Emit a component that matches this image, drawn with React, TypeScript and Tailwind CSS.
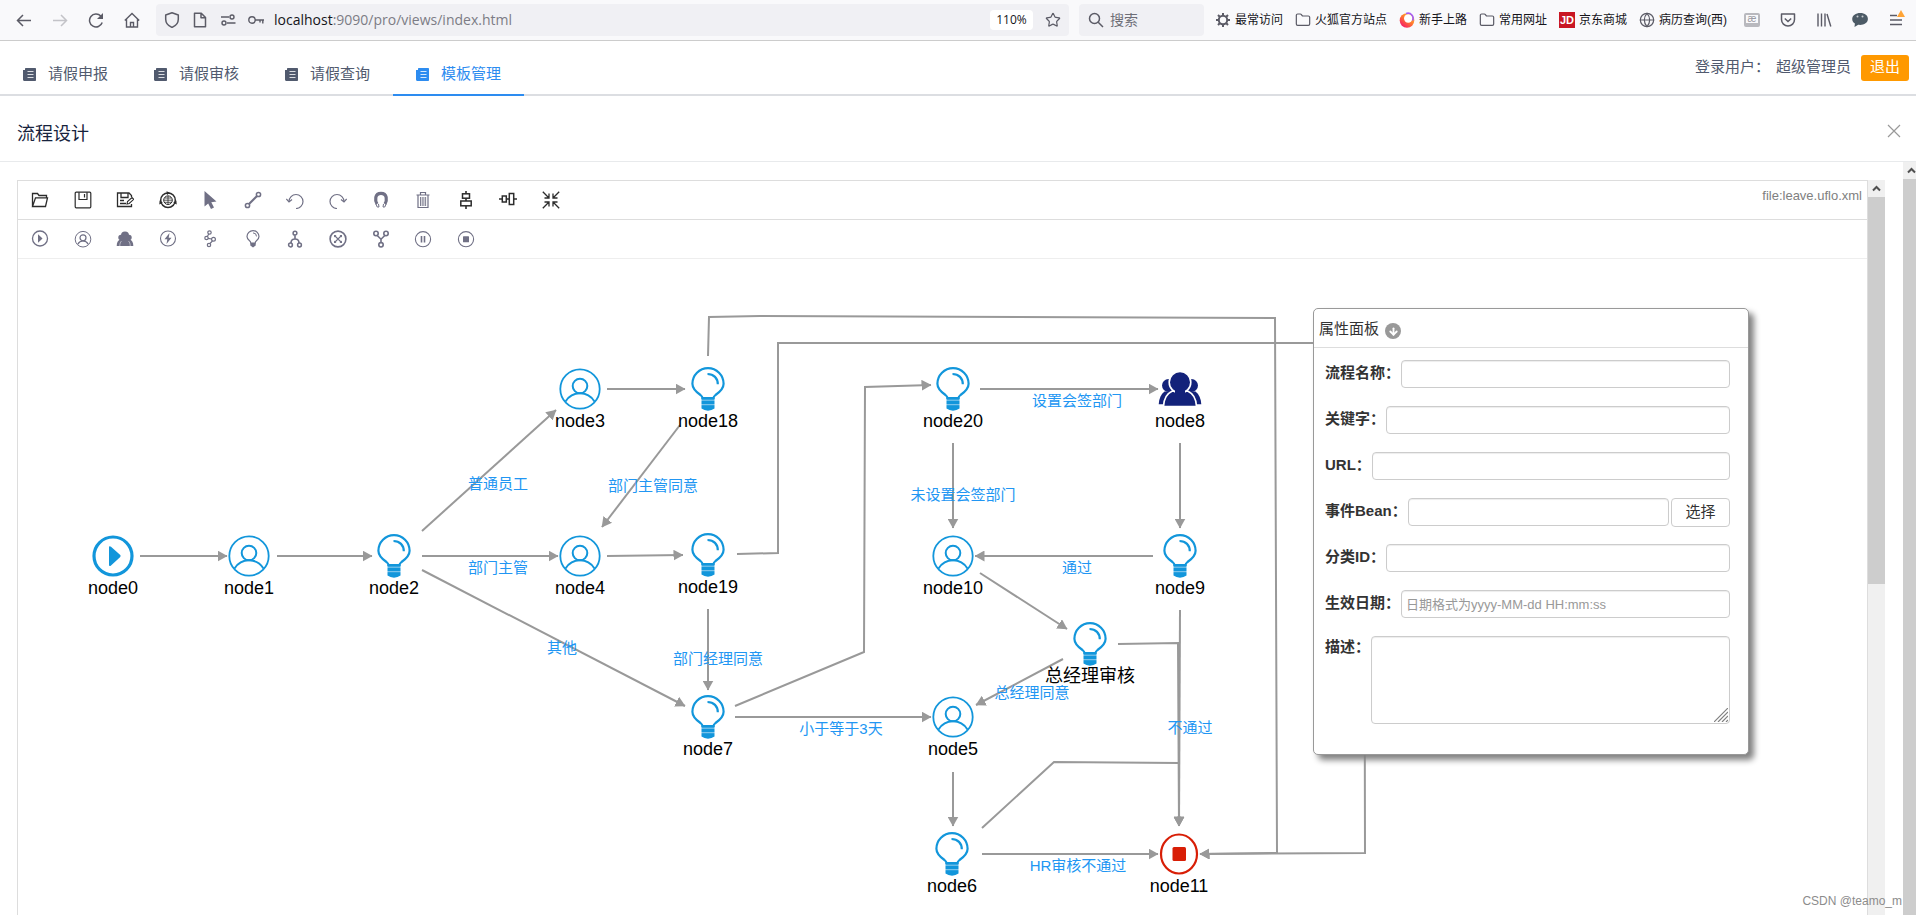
import React from "react";
import { ArrowDown, Folder, Globe, Star } from "lucide-react";

type Kind = "start" | "task" | "decision" | "countersign" | "end";

interface FlowNode {
  name: string;
  kind: Kind;
  x: number;
  y: number;
}

interface EdgeLabel {
  text: string;
  x: number;
  y: number;
}

const nodes: FlowNode[] = [
  { name: "node0", kind: "start", x: 95, y: 297 },
  { name: "node1", kind: "task", x: 231, y: 297 },
  { name: "node2", kind: "decision", x: 376, y: 297 },
  { name: "node3", kind: "task", x: 562, y: 130 },
  { name: "node18", kind: "decision", x: 690, y: 130 },
  { name: "node4", kind: "task", x: 562, y: 297 },
  { name: "node19", kind: "decision", x: 690, y: 296 },
  { name: "node20", kind: "decision", x: 935, y: 130 },
  { name: "node8", kind: "countersign", x: 1162, y: 130 },
  { name: "node10", kind: "task", x: 935, y: 297 },
  { name: "node9", kind: "decision", x: 1162, y: 297 },
  { name: "总经理审核", kind: "decision", x: 1072, y: 385 },
  { name: "node7", kind: "decision", x: 690, y: 458 },
  { name: "node5", kind: "task", x: 935, y: 458 },
  { name: "node6", kind: "decision", x: 934, y: 595 },
  { name: "node11", kind: "end", x: 1161, y: 595 },
];

const edges = [
  "122,297 209,297",
  "259,297 354,297",
  "404,272 538,151",
  "404,297 540,297",
  "404,311 667,447",
  "589,130 667,130",
  "662,166 584,268",
  "589,297 665,296",
  "690,97 691,58 742,57 1257,59 1259,594 1182,595",
  "719,295 760,294 760,84 1346,84 1347,594 1182,595",
  "690,350 690,431",
  "717,447 846,393 847,128 913,126",
  "717,458 913,458",
  "962,130 1140,130",
  "935,184 935,269",
  "1162,184 1162,269",
  "1135,297 957,297",
  "962,314 1049,370",
  "1045,400 958,446",
  "1100,385 1160,384 1161,567",
  "1162,351 1161,567",
  "964,569 1036,503 1161,504 1161,567",
  "935,513 935,567",
  "964,595 1140,595",
];

const edgeLabels: EdgeLabel[] = [
  { text: "普通员工", x: 480, y: 225 },
  { text: "部门主管", x: 480, y: 309 },
  { text: "其他", x: 544, y: 389 },
  { text: "部门主管同意", x: 635, y: 227 },
  { text: "未设置会签部门", x: 945, y: 236 },
  { text: "设置会签部门", x: 1059, y: 142 },
  { text: "通过", x: 1059, y: 309 },
  { text: "部门经理同意", x: 700, y: 400 },
  { text: "总经理同意", x: 1014, y: 434 },
  { text: "小于等于3天", x: 823, y: 470 },
  { text: "不通过", x: 1172, y: 469 },
  { text: "HR审核不通过", x: 1060, y: 607 },
];

const Svg = ({
  size = 18,
  className = "",
  children,
}: {
  size?: number;
  className?: string;
  children: React.ReactNode;
}) => (
  <svg
    width={size}
    height={size}
    viewBox={`0 0 ${size} ${size}`}
    fill="none"
    stroke="currentColor"
    className={`shrink-0 ${className}`}
  >
    {children}
  </svg>
);

const NodeIcon = ({ kind }: { kind: Kind }) => {
  switch (kind) {
    case "start":
      return (
        <Svg size={44} className="text-[#1296db]">
          <circle cx="22" cy="22" r="19" strokeWidth="3.2" />
          <path
            d="M18 13.5c0-1.5 1-1.7 2-.7l9 8c.8.8.8 1.6 0 2.4l-9 8.3c-1 1-2 .6-2-.8z"
            fill="currentColor"
            stroke="none"
          />
        </Svg>
      );
    case "task":
      return (
        <Svg size={44} className="text-[#1296db]">
          <circle cx="22" cy="22" r="19.7" strokeWidth="1.8" />
          <circle cx="22" cy="19" r="7.3" strokeWidth="2" />
          <path d="M7.5 34.5C11 29 16 26.3 22 26.3S33 29 36.5 34.5" strokeWidth="2" />
        </Svg>
      );
    case "decision":
      return (
        <Svg size={44} className="text-[#1296db]">
          <path
            d="M16.5 31c0-1.300-.7-2-2-3C9.500 24.500 6.400 21.500 6.400 16.700a15.600 15.600 0 0 1 31.200 0c0 4.800-3.100 7.800-8.100 11.300-1.300 1-2 1.700-2 3z"
            strokeWidth="2.2"
          />
          <path d="M21.500 7c6.300 0 10.300 4.200 10.300 10.300" strokeWidth="2.2" />
          <path d="M15.500 30.500h13v11L25.500 43l-3.500.8-3.500-.8-3-1.500z" fill="currentColor" stroke="none" />
          <path d="M15 33.200h14M15 37.700h14" stroke="#fff" strokeOpacity=".6" strokeWidth=".9" />
        </Svg>
      );
    case "countersign":
      return (
        <Svg size={44} className="text-[#13227a]">
          <g fill="currentColor" stroke="none">
            <circle cx="10.5" cy="18.5" r="6.5" />
            <circle cx="33.5" cy="18.5" r="6.5" />
            <path d="M.7 37.2C1 31.5 3 27 6.5 24.5h31c3.5 2.5 5.5 7 5.8 12.7z" />
          </g>
          <path
            d="M14 24.3c-5.5 2.5-8.2 7.5-8.5 15.2h33c-.3-7.7-3-12.7-8.5-15.2z"
            fill="currentColor"
            stroke="#fff"
            strokeWidth="1.6"
          />
          <circle cx="22" cy="15.3" r="10.8" fill="currentColor" stroke="#fff" strokeWidth="1.6" />
          <path d="M17 23h10v4H17z" fill="currentColor" stroke="none" />
        </Svg>
      );
    default:
      return (
        <Svg size={44} className="text-[#d81e06]">
          <ellipse cx="22" cy="22" rx="18" ry="19.5" strokeWidth="2.2" />
          <rect x="15.5" y="15" width="13.5" height="14" rx="1.5" fill="currentColor" stroke="none" />
        </Svg>
      );
  }
};

const editTools = [
  {
    name: "打开",
    icon: (
      <Svg className="text-[#2c2c2c]">
        <path d="M1.5 15.5v-13h5l1.5 2h7.5v2.3M1.5 15.5h13l2-8.7h-12z" strokeWidth="1.3" />
      </Svg>
    ),
  },
  {
    name: "保存",
    icon: (
      <Svg className="text-[#2c2c2c]">
        <rect x="1.2" y="1.2" width="15.6" height="15.6" rx="1" strokeWidth="1.2" />
        <path d="M5 1.2v7.3h8V1.2M10.5 3v3.5" strokeWidth="1.2" />
      </Svg>
    ),
  },
  {
    name: "另存为",
    icon: (
      <Svg className="text-[#2c2c2c]">
        <path d="M15.5 6V4.5L13 2H1.5v13.5h14V13M5 2v4.5h7V2M4 9.500h4M4 12.500h6" strokeWidth="1.3" />
        <path d="M11 13l.5-2.500 4.500-4 1.700 1.800-4.500 4.200z" strokeWidth="1.1" />
      </Svg>
    ),
  },
  {
    name: "发布",
    icon: (
      <Svg className="text-[#2c2c2c]">
        <circle cx="9" cy="9.2" r="7.3" strokeWidth="1.5" />
        <circle cx="9" cy="9.2" r="4.3" strokeWidth="1" />
        <path d="M4.7 9.2h8.600M9 4.700v8.800M5.500 7h7M5.500 11.300h7" strokeWidth=".8" />
        <path
          d="M7.500.2l3.500 1.500-3 2.300zM.3 13.500l.3-4 3.200 2.200zM17.700 13.500l-.3-4-3.200 2.200z"
          fill="currentColor"
          stroke="none"
        />
      </Svg>
    ),
  },
  {
    name: "选择",
    icon: (
      <Svg className="text-[#707085]">
        <path d="M3.5 0v15.500l3.700-3L10 18l3-1.400-2.700-5.300 5.200-.8z" fill="currentColor" stroke="none" />
      </Svg>
    ),
  },
  {
    name: "连线",
    icon: (
      <Svg className="text-[#707085]">
        <circle cx="3.5" cy="14.5" r="2.1" strokeWidth="1.5" />
        <circle cx="14.5" cy="3.5" r="2.1" strokeWidth="1.5" />
        <path d="M5 13L13 5" strokeWidth="2.2" />
      </Svg>
    ),
  },
  {
    name: "撤销",
    icon: (
      <Svg className="text-[#707085]">
        <path d="M3 10.500a7 7 0 1 1 7 7" strokeWidth="1.2" />
        <path d="M.3 8L3 11l3-2.500" strokeWidth="1.2" />
      </Svg>
    ),
  },
  {
    name: "重做",
    icon: (
      <Svg className="text-[#707085]">
        <path d="M15 10.500a7 7 0 1 0-7 7" strokeWidth="1.2" />
        <path d="M17.700 8L15 11l-3-2.500" strokeWidth="1.2" />
      </Svg>
    ),
  },
  {
    name: "吸附",
    icon: (
      <Svg className="text-[#707085]">
        <path d="M5 13C3 9.500 2.500 2.300 9 2.300S15 9.500 13 13" strokeWidth="3.2" />
        <path d="M4 13l1.200 3h1.800l-.5-3M14 13l-1.200 3H11l.5-3" strokeWidth="1" />
      </Svg>
    ),
  },
  {
    name: "删除",
    icon: (
      <Svg className="text-[#707085]">
        <path d="M2.500 4h13M6.500 4V1.500h5V4M4 4v12.500h10V4" strokeWidth="1.2" />
        <path d="M6.500 6v9M8.200 6v9M9.900 6v9M11.600 6v9" strokeWidth=".9" />
      </Svg>
    ),
  },
  {
    name: "垂直居中",
    icon: (
      <Svg className="text-[#2c2c2c]">
        <path d="M9 0v3M9 7v3M9 15v3" strokeWidth="1.6" />
        <rect x="5.5" y="2.8" width="7" height="4.4" strokeWidth="1.5" />
        <rect x="3.8" y="10" width="10.4" height="4.8" strokeWidth="1.5" />
      </Svg>
    ),
  },
  {
    name: "水平居中",
    icon: (
      <Svg className="text-[#2c2c2c]">
        <path d="M0 8h3M7.300 8h3M15 8h3" strokeWidth="1.6" />
        <rect x="3.3" y="5" width="4" height="6" strokeWidth="1.5" />
        <rect x="10.3" y="2.5" width="4.4" height="11" strokeWidth="1.5" />
      </Svg>
    ),
  },
  {
    name: "缩放",
    icon: (
      <Svg className="text-[#2c2c2c]">
        <path
          d="M.8.8L7 7M7 2.500V7H2.500M17.200.8L11 7M11 2.500V7h4.500M.8 17.200L7 11M7 15.500V11H2.500M17.200 17.200L11 11M11 15.500V11h4.500"
          strokeWidth="1.3"
        />
      </Svg>
    ),
  },
];

const nodeTools = [
  {
    name: "开始",
    icon: (
      <Svg>
        <circle cx="9" cy="8.5" r="7.5" strokeWidth="1.3" />
        <path d="M7 4.300v8.400l4.500-4.200z" fill="currentColor" stroke="none" />
      </Svg>
    ),
  },
  {
    name: "人工任务",
    icon: (
      <Svg>
        <circle cx="9" cy="9.2" r="7.8" strokeWidth="1" />
        <circle cx="9" cy="7.8" r="3" strokeWidth="1.2" />
        <path d="M3.800 14.200C5 12 6.800 10.900 9 10.900s4 1.100 5.200 3.300" strokeWidth="1.2" />
      </Svg>
    ),
  },
  {
    name: "会签",
    icon: (
      <Svg>
        <g fill="currentColor" stroke="none">
          <circle cx="9" cy="5.5" r="4" />
          <circle cx="5" cy="7.5" r="2.7" />
          <circle cx="13" cy="7.5" r="2.7" />
          <path d="M.7 16c0-3.500 1.300-6 4.300-7h8c3 1 4.300 3.500 4.300 7z" />
        </g>
        <path
          d="M3.800 16c0-2.500.6-4 1.800-5M14.200 16c0-2.500-.6-4-1.800-5"
          className="stroke-white"
          strokeWidth=".5"
        />
      </Svg>
    ),
  },
  {
    name: "动作",
    icon: (
      <Svg>
        <circle cx="9" cy="8.5" r="7.5" strokeWidth="1.1" />
        <path d="M10.500 3L5.500 9.300h2.800L7.500 14l5-6.300H9.700z" fill="currentColor" stroke="none" />
      </Svg>
    ),
  },
  {
    name: "路由",
    icon: (
      <Svg>
        <circle cx="8.5" cy="2.5" r="1.7" strokeWidth="1.2" />
        <circle cx="5.5" cy="8" r="1.7" strokeWidth="1.2" />
        <circle cx="12.5" cy="9.3" r="1.9" strokeWidth="1.2" />
        <circle cx="8" cy="15" r="1.7" strokeWidth="1.2" />
        <path d="M7.800 4L6.300 6.500M7 8.400l3.700.6M11.500 10.800L9 13.500" strokeWidth="1.2" />
      </Svg>
    ),
  },
  {
    name: "决策",
    icon: (
      <Svg>
        <path
          d="M6.800 13c0-1.200-.5-1.700-1.500-2.500C3.800 9.300 3 8.300 3 6.600a6 6 0 0 1 12 0c0 1.700-.8 2.700-2.300 3.900-1 .8-1.500 1.300-1.500 2.500z"
          strokeWidth="1.2"
        />
        <path d="M9 2.900a3.500 3.500 0 0 1 3.500 3.500" strokeWidth="1" />
        <path d="M6.300 13h5.400v2.500L9 17.500l-2.700-2z" fill="currentColor" stroke="none" />
      </Svg>
    ),
  },
  {
    name: "分支",
    icon: (
      <Svg>
        <circle cx="9" cy="3.2" r="1.9" strokeWidth="1.5" />
        <circle cx="4.5" cy="15" r="1.9" strokeWidth="1.5" />
        <circle cx="13.5" cy="15" r="1.9" strokeWidth="1.5" />
        <path d="M9 5.200V9M5 13c0-2.500 1-4 4-4s4 1.500 4 4" strokeWidth="1.6" />
      </Svg>
    ),
  },
  {
    name: "外部流程",
    icon: (
      <Svg>
        <circle cx="9" cy="9" r="7.9" strokeWidth="1.6" />
        <path d="M5.500 5.500l7 7M12.500 5.500l-7 7" strokeWidth="1.1" />
        <path
          d="M5 5h2.500L5 7.500zM13 5h-2.500L13 7.500zM5 13h2.500L5 10.500zM13 13h-2.500l2.500-2.500z"
          fill="currentColor"
          stroke="none"
        />
      </Svg>
    ),
  },
  {
    name: "聚合",
    icon: (
      <Svg>
        <circle cx="4" cy="3.5" r="2.2" strokeWidth="1.6" />
        <circle cx="14" cy="3.5" r="2.2" strokeWidth="1.6" />
        <circle cx="9" cy="14.8" r="2.2" strokeWidth="1.6" />
        <path d="M5.200 5.500L9 9.200l3.800-3.700M9 9.200v3.500" strokeWidth="1.6" />
      </Svg>
    ),
  },
  {
    name: "暂停",
    icon: (
      <Svg>
        <circle cx="9" cy="9.2" r="7.6" strokeWidth="1.1" />
        <path d="M7.500 6v6.500M10.500 6v6.500" strokeWidth="1.6" />
      </Svg>
    ),
  },
  {
    name: "结束",
    icon: (
      <Svg>
        <circle cx="9" cy="9.2" r="7.6" strokeWidth="1.1" />
        <rect x="6" y="6.2" width="6" height="6" rx=".5" fill="currentColor" stroke="none" />
      </Svg>
    ),
  },
];

const GearIcon = () => (
  <Svg size={16} className="text-[#5b5b66]">
    <circle cx="8" cy="8" r="4.2" strokeWidth="2" />
    <path
      d="M8 1v3M8 12v3M1 8h3M12 8h3M3 3l2.200 2.200M10.800 10.800L13 13M3 13l2.200-2.200M10.800 5.200L13 3"
      strokeWidth="2"
    />
  </Svg>
);

const FoxIcon = () => (
  <Svg size={16}>
    <defs>
      <linearGradient id="fox" x1="1" y1="0" x2=".2" y2="1">
        <stop offset="0" stopColor="#ffd43a" />
        <stop offset=".5" stopColor="#ff7a2e" />
        <stop offset="1" stopColor="#f5156c" />
      </linearGradient>
    </defs>
    <circle cx="8" cy="8.5" r="7.3" fill="url(#fox)" stroke="none" />
    <circle cx="9.2" cy="6.5" r="4.2" fill="#fff" stroke="none" />
    <path d="M7 1.500c5-1.500 8.500 3 6.500 7" stroke="#a45cf5" strokeWidth="1.6" />
  </Svg>
);

const bookmarks = [
  { text: "最常访问", icon: <GearIcon /> },
  { text: "火狐官方站点", icon: <Folder size={16} strokeWidth={1.8} className="text-[#5b5b66]" /> },
  { text: "新手上路", icon: <FoxIcon /> },
  { text: "常用网址", icon: <Folder size={16} strokeWidth={1.8} className="text-[#5b5b66]" /> },
  {
    text: "京东商城",
    icon: (
      <span className="flex h-4 w-4 items-center justify-center bg-[#c91623] text-[11px] leading-4 font-bold text-white">
        JD
      </span>
    ),
  },
  { text: "病历查询(西)", icon: <Globe size={16} strokeWidth={1.8} className="text-[#5b5b66]" /> },
];

const BrowserBar = () => (
  <div className="flex h-[41px] shrink-0 items-center border-b border-[#cccccc] bg-[#f9f9fb] pr-3 pl-4 text-[#5b5b66]">
    <div className="flex items-center gap-5">
      <button type="button" aria-label="后退">
        <Svg size={16}>
          <path d="M15 8.500H1.500M7 3L1.500 8.500 7 14" strokeWidth="1.5" />
        </Svg>
      </button>
      <button type="button" aria-label="前进" className="text-[#c3c3c8]">
        <Svg size={16}>
          <path d="M1 8.500h13.500M9 3l5.500 5.500L9 14" strokeWidth="1.5" />
        </Svg>
      </button>
      <button type="button" aria-label="刷新">
        <Svg size={16}>
          <path d="M14.200 10.500A6.500 6.500 0 1 1 12.800 4" strokeWidth="1.5" />
          <path d="M15 1v6H9z" fill="currentColor" stroke="none" />
        </Svg>
      </button>
      <button type="button" aria-label="主页">
        <Svg size={16}>
          <path d="M.8 8.500L8 1.500l7.200 7M2.500 7v8h11V7M6.500 15v-4.500h3V15" strokeWidth="1.4" />
        </Svg>
      </button>
    </div>
    <div className="ml-4 flex h-8 flex-1 items-center gap-3 rounded bg-[#f0f0f4] px-2">
      <Svg size={16}>
        <path
          d="M8 .8L14.300 3v4.200c0 3.800-2.500 6.600-6.300 8.200-3.800-1.600-6.300-4.400-6.300-8.200V3z"
          strokeWidth="1.5"
          strokeLinejoin="round"
        />
      </Svg>
      <Svg size={16}>
        <path d="M2.500 1.200h6.800l4.200 4.300v9.300h-11zM9 1.200v4.500h4.500" strokeWidth="1.5" strokeLinejoin="round" />
      </Svg>
      <Svg size={16}>
        <path d="M1 5h8M7 11h8.500" strokeWidth="1.4" />
        <circle cx="12" cy="5" r="2" strokeWidth="1.4" />
        <circle cx="4" cy="11" r="2" strokeWidth="1.4" />
      </Svg>
      <Svg size={16}>
        <circle cx="4" cy="8" r="3.2" strokeWidth="1.4" />
        <path d="M7 8h9M14.800 8v3.500M12 8v2.500" strokeWidth="1.4" />
      </Svg>
      <div
        role="textbox"
        aria-label="地址栏"
        className="-ml-0.5 flex-1 pb-px font-['Open_Sans',sans-serif] text-sm text-[#7c7c85]"
      >
        <span className="text-[#15141a]">localhost</span>:9090/pro/views/index.html
      </div>
      <button
        type="button"
        className="h-5 w-[43px] rounded-sm bg-white font-['Open_Sans',sans-serif] text-xs leading-5 text-[#15141a]"
      >
        110%
      </button>
      <Star size={16} strokeWidth={1.8} />
    </div>
    <div className="ml-[10px] flex h-8 w-[125px] items-center gap-1.5 rounded bg-[#f0f0f4] pl-[9px]">
      <Svg size={16}>
        <circle cx="6.5" cy="6.5" r="5" strokeWidth="1.5" />
        <path d="M10.200 10.200L15 15" strokeWidth="1.5" />
      </Svg>
      <input
        type="text"
        aria-label="搜索"
        placeholder="搜索"
        className="w-full min-w-0 text-sm outline-none placeholder:text-[#6e6e77]"
      />
    </div>
    <div className="ml-[11px] flex items-center gap-3">
      {bookmarks.map(({ text, icon }) => (
        <a key={text} href="#" className="flex items-center gap-1 text-xs whitespace-nowrap text-[#15141a]">
          {icon}
          {text}
        </a>
      ))}
    </div>
    <div className="ml-[17px] flex items-center gap-5">
      <span className="flex h-[14px] w-4 items-start justify-center rounded-xs border-2 border-b-4 border-[#b9b9be] text-[10px] leading-[8px] text-[#9c9ca3]">
        æ
      </span>
      <Svg size={16}>
        <path d="M1.500 2h13v5.500a6.500 6.500 0 0 1-13 0z" strokeWidth="1.5" strokeLinejoin="round" />
        <path d="M4.800 6.500L8 9.500l3.200-3" strokeWidth="1.5" />
      </Svg>
      <Svg size={16}>
        <path d="M2 1.500v13M5.500 1.500v13M9 1.500v13M11 2l3.800 12.500" strokeWidth="1.4" />
      </Svg>
      <Svg size={16} className="text-[#4d5b66]">
        <path
          d="M8.200 1C3.800 1 .2 3.500.2 7c0 2 1.200 3.600 2.700 4.600L2.500 15l3.700-2.200c5 .8 9.700-1.800 9.700-5.800C15.900 3.500 13 1 8.200 1z"
          fill="currentColor"
          stroke="none"
        />
        <circle cx="5.5" cy="4.5" r="1" fill="#c8ccd0" stroke="none" />
        <circle cx="10.5" cy="4.5" r="1" fill="#c8ccd0" stroke="none" />
      </Svg>
      <button type="button" aria-label="菜单" className="relative">
        <Svg size={16}>
          <path d="M2 3.500h7M2 8h12M2 12.500h12" strokeWidth="1.5" />
        </Svg>
        <svg width="8" height="7" viewBox="0 0 8 7" className="absolute -top-0.5 -right-px">
          <path d="M4 0l4 7H0z" fill="#ffa436" />
        </svg>
      </button>
    </div>
  </div>
);

const tabs = ["请假申报", "请假审核", "请假查询", "模板管理"];

const Header = () => (
  <header className="flex h-[55px] shrink-0 justify-between border-b-2 border-[#dcdee2] text-[15px] text-[#515a6e]">
    <nav className="flex">
      {tabs.map((tab) => (
        <a
          key={tab}
          href="#"
          className={`-mb-0.5 flex w-[131px] items-center gap-3 border-b-2 pt-3.5 pl-[23px] ${
            tab === "模板管理" ? "border-[#2d8cf0] text-[#2d8cf0]" : "border-transparent"
          }`}
        >
          <Svg size={13}>
            <path
              d="M3 0h9c.6 0 1 .4 1 1v11c0 .6-.4 1-1 1H1.500C.6 13 0 12.400 0 11.500V2h2V1c0-.6.4-1 1-1z"
              fill="currentColor"
              stroke="none"
            />
            <path d="M4.500 3.500h6M4.500 6.500h6M4.500 9.500h6" stroke="#fff" strokeWidth=".8" />
          </Svg>
          {tab}
        </a>
      ))}
    </nav>
    <div className="flex items-center pr-[7px]">
      <span>登录用户：</span>
      <span className="ml-1.5">超级管理员</span>
      <button type="button" className="ml-[10px] h-[26px] w-12 rounded-[3px] bg-[#ff9900] text-white">
        退出
      </button>
    </div>
  </header>
);

const ScrollBar = ({ thumb }: { thumb: string }) => (
  <div className="flex h-full w-[17px] shrink-0 flex-col bg-[#f0f0f0]">
    <div className="flex h-[17px] items-center justify-center text-[#505050]">
      <Svg size={9}>
        <path d="M1 6.500L4.500 3 8 6.500" strokeWidth="2" />
      </Svg>
    </div>
    <div className={`bg-[#cdcdcd] ${thumb}`} />
  </div>
);

const fieldClass =
  "h-7 min-w-0 flex-1 rounded-[4px] border border-[#cccccc] bg-white px-1 text-[13px] text-[#555555] shadow-[inset_0_1px_1px_rgba(0,0,0,0.075)] outline-none placeholder:text-[#999999]";

const fields = [
  { id: "name", label: "流程名称：" },
  { id: "key", label: "关键字：" },
  { id: "url", label: "URL：" },
  { id: "bean", label: "事件Bean：", pick: true },
  { id: "category", label: "分类ID：" },
  { id: "effectDate", label: "生效日期：", placeholder: "日期格式为yyyy-MM-dd HH:mm:ss" },
];

const PropertyPanel = () => (
  <section className="absolute top-[49px] right-[118px] flex h-[447px] w-[436px] flex-col rounded-[5px] border border-[#999999] bg-white text-[15px] text-[#333333] shadow-[5px_5px_6px_#808080]">
    <div className="flex h-[39px] items-center gap-1.5 border-b border-[#dddddd] px-[5px] pt-0.5">
      属性面板
      <button
        type="button"
        aria-label="折叠"
        className="mt-1 flex h-4 w-4 items-center justify-center rounded-full bg-[#999999] text-white"
      >
        <ArrowDown size={11} strokeWidth={4} />
      </button>
    </div>
    <form className="flex flex-col gap-[18px] pt-3 pr-[18px] pl-[11px]">
      {fields.map(({ id, label, placeholder, pick }) => (
        <div key={id} className="flex h-7 items-center">
          <label htmlFor={id} className="mr-px pb-0.5 font-bold">
            {label}
          </label>
          <input id={id} type="text" placeholder={placeholder} className={fieldClass} />
          {pick && (
            <button type="button" className="ml-0.5 h-[29px] w-[59px] rounded-[4px] border border-[#cccccc]">
              选择
            </button>
          )}
        </div>
      ))}
      <div className="relative flex items-start">
        <label htmlFor="desc" className="mr-px font-bold">
          描述：
        </label>
        <textarea
          id="desc"
          className="h-[88px] min-w-0 flex-1 resize-none rounded-[4px] border border-[#cccccc] px-1 text-[13px] shadow-[inset_0_1px_1px_rgba(0,0,0,0.075)] outline-none"
        />
        <svg
          width="14"
          height="14"
          viewBox="0 0 14 14"
          stroke="#808080"
          strokeWidth="1.2"
          className="pointer-events-none absolute right-0.5 bottom-0.5"
        >
          <path d="M0 14L14 0M4 14L14 4M8 14l6-6M12 14l2-2" />
        </svg>
      </div>
    </form>
  </section>
);

const Canvas = () => (
  <div className="relative min-h-0 flex-1 overflow-hidden">
    <svg className="absolute inset-0 h-full w-full" fill="none" stroke="#999999" strokeWidth="2">
      <defs>
        <marker
          id="arrow"
          markerUnits="userSpaceOnUse"
          markerWidth="10"
          markerHeight="11"
          refX="9.5"
          refY="5.5"
          orient="auto"
        >
          <path d="M0 0l10 5.500L0 11z" fill="#999999" stroke="none" />
        </marker>
      </defs>
      {edges.map((points) => (
        <polyline key={points} points={points} markerEnd="url(#arrow)" />
      ))}
    </svg>
    {nodes.map(({ name, kind, x, y }) => (
      <div
        key={name}
        className="absolute -mt-[22px] -ml-16 flex w-32 flex-col items-center text-lg leading-5 text-black"
        style={{ left: x, top: y }}
      >
        <NodeIcon kind={kind} />
        {name}
      </div>
    ))}
    {edgeLabels.map(({ text, x, y }) => (
      <span
        key={text}
        className="absolute -mt-2.5 -ml-16 w-32 text-center text-[15px] leading-5 text-[#2196f3]"
        style={{ left: x, top: y }}
      >
        {text}
      </span>
    ))}
    <PropertyPanel />
  </div>
);

const Designer = () => (
  <div className="flex min-w-0 flex-1 flex-col border-t border-r border-l border-[#dddddd]">
    <div className="flex h-[39px] justify-between border-b border-[#dddddd] pl-px">
      <div className="grid w-[553px] grid-cols-13 text-[#707085]">
        {editTools.map(({ name, icon }) => (
          <button key={name} type="button" title={name} className="flex items-center justify-center">
            {icon}
          </button>
        ))}
      </div>
      <span className="pt-[5px] pr-[5px] text-[13px] text-[#808080]">file:leave.uflo.xml</span>
    </div>
    <div className="h-[39px] border-b border-[#eeeeee] pl-px">
      <div className="grid h-full w-[553px] grid-cols-13 text-[#707085]">
        {nodeTools.map(({ name, icon }) => (
          <button key={name} type="button" title={name} className="flex items-center justify-center">
            {icon}
          </button>
        ))}
      </div>
    </div>
    <Canvas />
  </div>
);

const App = () => {
  return (
    <div className="flex h-screen flex-col overflow-hidden bg-white font-['Liberation_Sans','Noto_Sans_CJK_SC',sans-serif]">
      <BrowserBar />
      <Header />
      <div className="flex h-[66px] shrink-0 items-center justify-between border-b border-[#e8eaec] pt-1 pr-[15px] pl-[17px]">
        <h1 className="pt-1.5 text-lg text-[#17233d]">流程设计</h1>
        <button type="button" aria-label="关闭" className="text-[#999999]">
          <Svg size={14}>
            <path d="M1 1l12 12M13 1L1 13" strokeWidth="1.2" />
          </Svg>
        </button>
      </div>
      <main className="relative flex min-h-0 flex-1">
        <div className="flex min-w-0 flex-1 pt-[18px] pr-[18px] pl-[17px]">
          <Designer />
          <ScrollBar thumb="h-[387px]" />
        </div>
        <div className="w-[13px] overflow-hidden">
          <ScrollBar thumb="flex-1" />
        </div>
        <span className="absolute right-[14px] bottom-1.5 text-xs text-[#8c8c8c]">CSDN @teamo_m</span>
      </main>
    </div>
  );
};

export default App;
